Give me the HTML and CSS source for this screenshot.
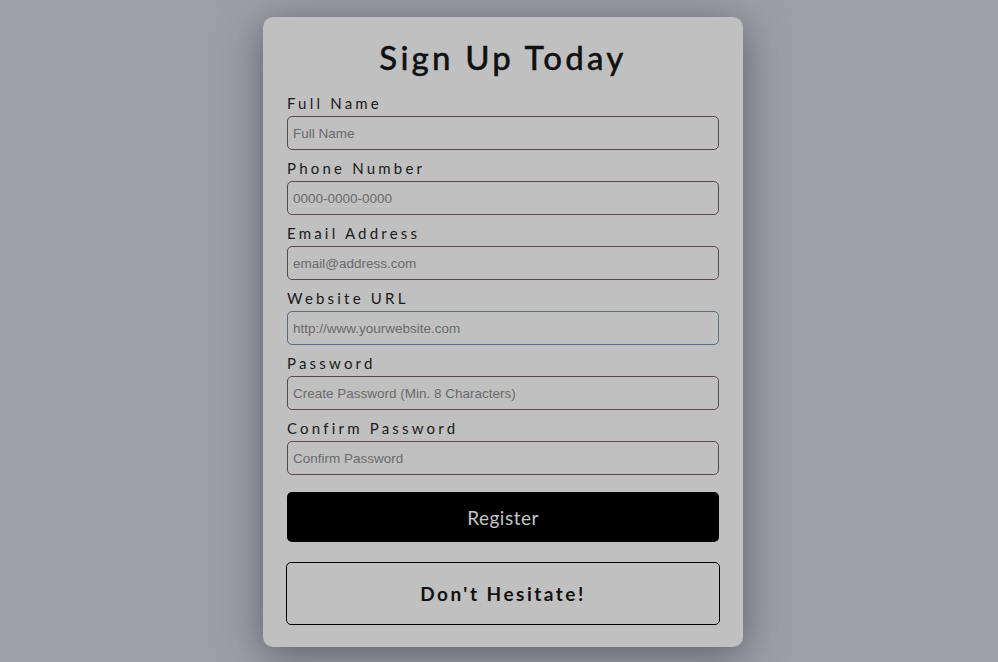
FILE: index.html
```html
<!DOCTYPE html>
<html lang="en">

<head>
    <meta charset="UTF-8">
    <meta name="viewport" content="width=device-width, initial-scale=1.0">
    <title>Sign Up Today</title>
    <link rel="stylesheet" href="styles.css">
</head>

<body>

    <div class="signup">
        <h1>Sign Up Today</h1>
        <form class="signup-form">
            <label for="name">Full Name</label>
            <input type="text" id="name" placeholder="Full Name">

            <label for="phone">Phone Number</label>
            <input type="tel" id="phone" placeholder="0000-0000-0000">

            <label for="email">Email Address</label>
            <input type="email" id="email" placeholder="email@address.com">

            <label for="website">Website URL</label>
            <input type="url" id="website" class="url" placeholder="http://www.yourwebsite.com">

            <label for="password">Password</label>
            <input type="password" id="password" placeholder="Create Password (Min. 8 Characters)">

            <label for="confirm">Confirm Password</label>
            <input type="password" id="confirm" placeholder="Confirm Password">

            <button type="button" class="register">Register</button>
        </form>
        <!-- Bottom message box -->
        <div class="hesitate">Don't Hesitate!</div>
    </div>

</body>

</html>
```

FILE: styles.css
```css
* {
    margin: 0;
    padding: 0;
    box-sizing: border-box;
}

body {
    font-family: Lato, "Noto Sans", sans-serif;
    background-color: #9c9fa6;
    color: #111;
    display: flex;
    justify-content: center;
    min-height: 662px;
    padding-left: 8px;
}

.signup {
    width: 480px;
    margin-top: 17px;
    align-self: flex-start;
    padding: 20px 24px 22px;
    background-color: #c0c0c0;
    border-radius: 10px;
    box-shadow: 0 8px 40px rgba(40, 42, 60, 0.55);
}

.signup h1 {
    text-align: center;
    font-size: 33px;
    line-height: 40px;
    font-weight: 500;
    letter-spacing: 3.2px;
    margin-bottom: 16px;
    -webkit-text-stroke: 0.4px #111;
}

.signup-form label {
    display: block;
    font-size: 15px;
    line-height: 20px;
    letter-spacing: 3.2px;
    margin-bottom: 3px;
    color: #1a1a1a;
}

.signup-form input {
    display: block;
    width: 100%;
    height: 34px;
    margin-bottom: 8px;
    padding: 0 5px;
    font-family: "Liberation Sans", Arial, sans-serif;
    font-size: 13.5px;
    background-color: #c0c0c0;
    border: 1px solid #564a4e;
    border-radius: 5px;
}

.signup-form input.url {
    border-color: #5a6a7a;
}

.signup-form input::placeholder {
    color: #6a6a6a;
}

.register {
    display: block;
    width: 100%;
    height: 50px;
    margin-top: 17px;
    background-color: #000;
    color: #c4c4c4;
    border: none;
    border-radius: 5px;
    font-family: Lato, "Noto Sans", sans-serif;
    font-size: 19px;
    letter-spacing: 0.5px;
}

.hesitate {
    margin: 20px -1px 0;
    height: 63px;
    border: 1px solid #000;
    border-radius: 5px;
    display: flex;
    align-items: center;
    justify-content: center;
    font-size: 19px;
    font-weight: 700;
    letter-spacing: 2.5px;
}
```
